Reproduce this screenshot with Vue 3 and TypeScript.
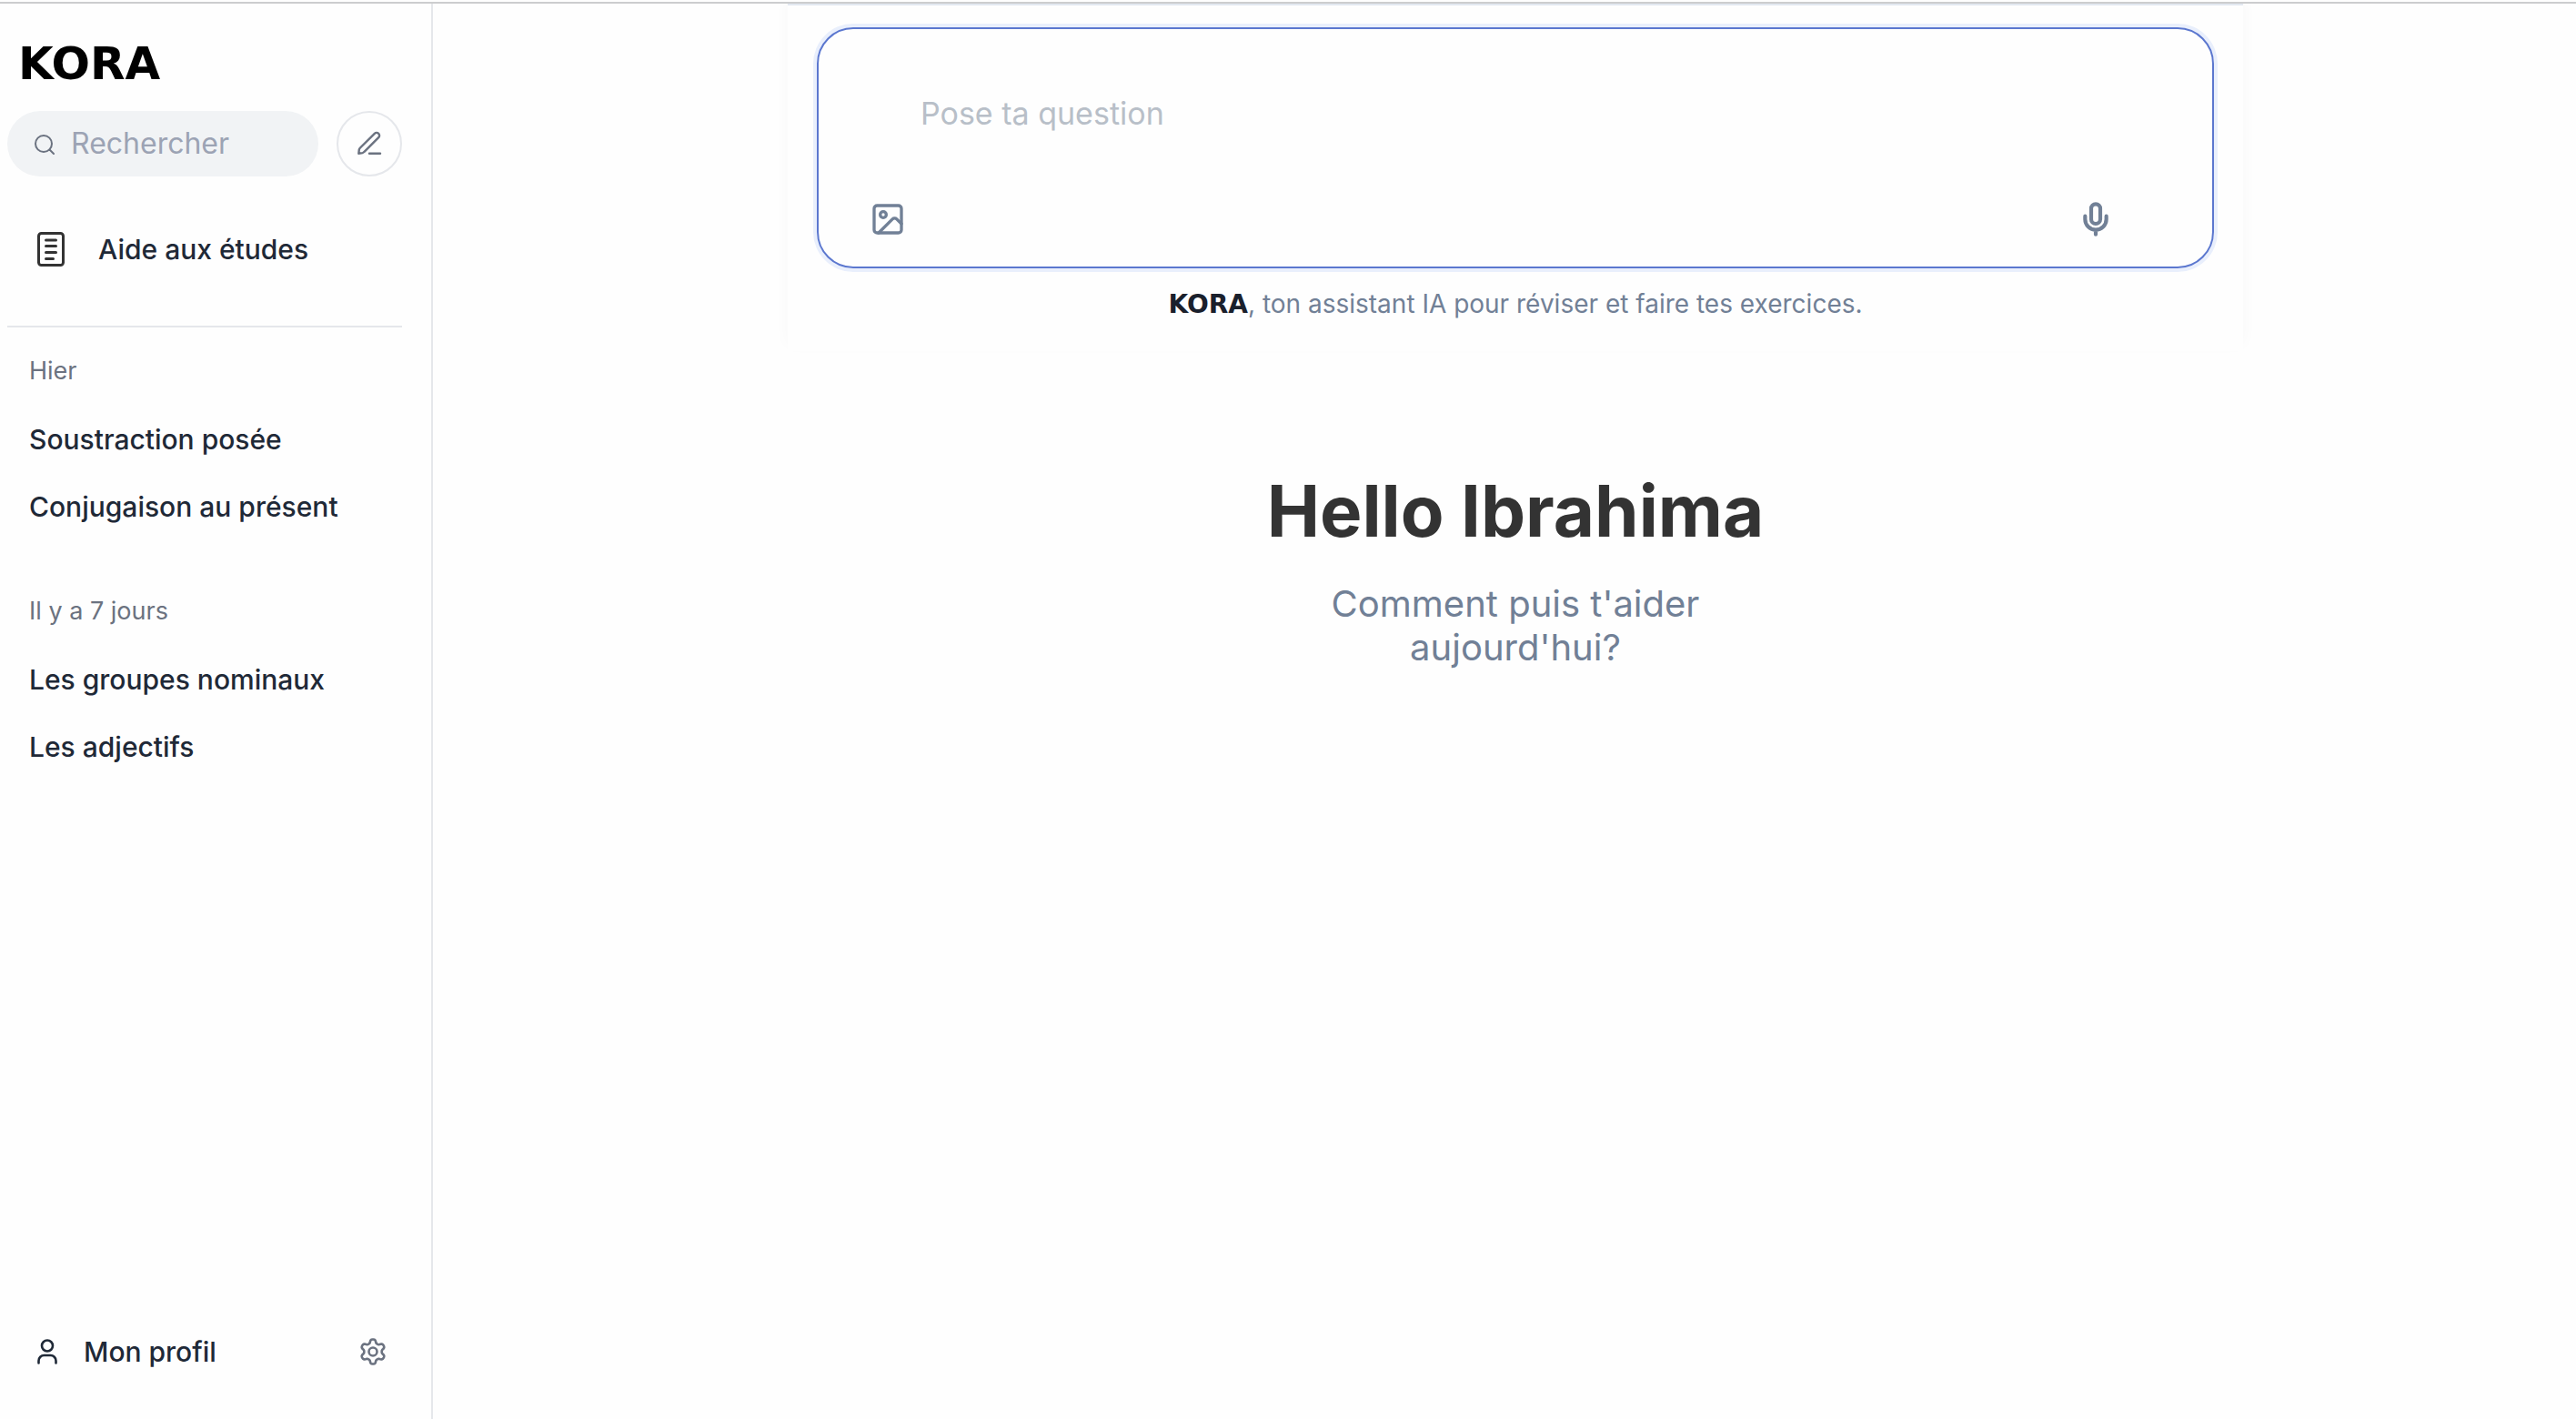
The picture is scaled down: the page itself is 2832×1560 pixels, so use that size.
<script setup lang="ts">
import { ref } from 'vue'

interface HistoryGroup {
  label: string
  items: string[]
}

const search = ref('')
const question = ref('')

const groups: HistoryGroup[] = [
  { label: 'Hier', items: ['Soustraction posée', 'Conjugaison au présent'] },
  { label: 'Il y a 7 jours', items: ['Les groupes nominaux', 'Les adjectifs'] },
]

// Outline of a gear with rounded teeth, the first one pointing up.
function gearOutline(teeth: number, middle: number, depth: number): string {
  const steps = 144
  const points: string[] = []
  for (let i = 0; i < steps; i++) {
    const angle = (i / steps) * Math.PI * 2
    const radius = middle + depth * Math.tanh(1.8 * Math.cos(teeth * angle))
    const x = 16 + radius * Math.sin(angle)
    const y = 16 - radius * Math.cos(angle)
    points.push(`${x.toFixed(2)} ${y.toFixed(2)}`)
  }
  return `M${points.join('L')}Z`
}

const gearPath = gearOutline(6, 11.6, 2)
</script>

<template>
  <div class="page">
    <aside class="sidebar">
      <a class="logo" href="#">KORA</a>

      <div class="tools">
        <label class="search">
          <svg class="icon-search" viewBox="0 0 24 24" aria-hidden="true">
            <circle cx="12" cy="12" r="9" />
            <path d="m18.500 18.500 4.500 4.500" />
          </svg>
          <input v-model="search" type="text" placeholder="Rechercher" aria-label="Rechercher" />
        </label>
        <button class="compose" type="button" aria-label="Nouvelle conversation">
          <svg viewBox="0 0 28 28" aria-hidden="true">
            <path d="M2.300 24.800 2.800 20.500Q3 19.500 4 18.500L19.800 2.800a3.100 3.100 0 0 1 4.400 4.400L8.500 22.800Q7.500 23.900 6.500 24.100Z" />
            <path d="M14 24.800h12" />
          </svg>
        </button>
      </div>

      <a class="study" href="#">
        <svg viewBox="0 0 30 38" aria-hidden="true">
          <rect x="1.5" y="1.5" width="27" height="35" rx="3" />
          <path d="M9.5 9h11M9.5 15.500h11M9.5 22.500h11M9.5 29.500h8" />
        </svg>
        <span>Aide aux études</span>
      </a>

      <nav class="history" aria-label="Historique">
        <section v-for="group in groups" :key="group.label" class="group">
          <h2>{{ group.label }}</h2>
          <ul>
            <li v-for="item in group.items" :key="item"><a href="#">{{ item }}</a></li>
          </ul>
        </section>
      </nav>

      <footer class="profile">
        <a class="profile-link" href="#">
          <svg viewBox="0 0 24 28" aria-hidden="true">
            <circle cx="12" cy="7.5" r="6" />
            <path d="M2.500 26.500v-2.500a6 6 0 0 1 6-6h7a6 6 0 0 1 6 6v2.500" />
          </svg>
          <span>Mon profil</span>
        </a>
        <button class="settings" type="button" aria-label="Paramètres">
          <svg viewBox="0 0 32 32" aria-hidden="true">
            <path :d="gearPath" />
            <circle cx="16" cy="16" r="4.5" />
          </svg>
        </button>
      </footer>
    </aside>

    <main class="main">
      <section class="panel">
        <form class="composer" @submit.prevent>
          <textarea v-model="question" rows="1" placeholder="Pose ta question" aria-label="Pose ta question"></textarea>
          <div class="actions">
            <button type="button" aria-label="Ajouter une image">
              <svg viewBox="0 0 24 24" aria-hidden="true">
                <rect x="3" y="3" width="18" height="18" rx="2" />
                <circle cx="9" cy="9" r="2" />
                <path d="m21 15-3.086-3.086a2 2 0 0 0-2.828 0L6 21" />
              </svg>
            </button>
            <button type="button" class="mic" aria-label="Dicter">
              <svg viewBox="0 0 24 24" aria-hidden="true">
                <rect x="9" y="2" width="6" height="13" rx="3" />
                <path d="M19 10v2a7 7 0 0 1-14 0v-2M12 19v3" />
              </svg>
            </button>
          </div>
        </form>
        <p class="tagline"><strong>KORA</strong>, ton assistant IA pour réviser et faire tes exercices.</p>
      </section>

      <section class="welcome">
        <h1>Hello Ibrahima</h1>
        <p>Comment puis t'aider aujourd'hui?</p>
      </section>
    </main>
  </div>
</template>

<style>
body {
  margin: 0;
  background: #fefefe;
}
</style>

<style scoped>
.page {
  box-sizing: border-box;
  display: flex;
  gap: 8px;
  min-height: 100vh;
  padding-top: 4px;
  background: linear-gradient(#fefefe 2px, #cccdce 2px, #cccdce 4px, #fefefe 4px);
  color: #1f2937;
  font-family: Inter, "Liberation Sans", sans-serif;
  font-size: 30px;
  font-weight: 500;
  line-height: 40px;
}

svg {
  display: block;
  flex: none;
  fill: none;
  stroke: currentColor;
  stroke-width: 2;
  stroke-linecap: round;
  stroke-linejoin: round;
}

a {
  color: inherit;
  text-decoration: none;
}

button {
  display: flex;
  align-items: center;
  justify-content: center;
  padding: 0;
  border: 0;
  background: none;
  color: #6b7280;
}

input,
textarea {
  min-width: 0;
  padding: 0;
  border: 0;
  outline: 0;
  background: none;
  color: inherit;
  font: inherit;
}

.sidebar {
  box-sizing: border-box;
  display: flex;
  flex: none;
  flex-direction: column;
  width: 476px;
  padding: 36px 32px 0 8px;
  border-right: 2px solid #e5e7eb;
}

.logo {
  align-self: flex-start;
  padding-left: 12px;
  color: #000;
  font-family: "DejaVu Sans", sans-serif;
  font-size: 50px;
  font-weight: 700;
  line-height: 60px;
}

.tools {
  display: flex;
  gap: 20px;
  margin-top: 22px;
}

.search {
  display: flex;
  flex: 1;
  align-items: center;
  gap: 18px;
  min-width: 0;
  height: 72px;
  padding: 0 28px;
  border-radius: 36px;
  background: #f1f3f5;
  color: #6b7280;
}

.icon-search {
  width: 24px;
  height: 24px;
}

.search input {
  flex: 1;
  font-size: 32px;
  font-weight: 400;
}

.search input::placeholder {
  color: #9ca3b4;
  opacity: 1;
}

.compose {
  box-sizing: border-box;
  width: 72px;
  height: 72px;
  border: 2px solid #e5e7eb;
  border-radius: 50%;
}

.compose svg {
  width: 28px;
  height: 28px;
  stroke-width: 2.4;
}

.study {
  display: flex;
  align-items: center;
  gap: 37px;
  height: 80px;
  margin: 40px 0 44px;
  padding-left: 33px;
}

.study svg {
  width: 30px;
  height: 38px;
  color: #333;
  stroke-width: 3;
}

.history {
  display: flex;
  flex: 1;
  flex-direction: column;
  gap: 58px;
  padding: 28px 24px 0;
  border-top: 2px solid #e5e7eb;
}

.group h2 {
  margin: 0 0 18px;
  color: #6b7280;
  font-size: 27px;
  font-weight: 400;
  line-height: 40px;
}

.group ul {
  margin: 0;
  padding: 0;
  list-style: none;
}

.group a {
  display: block;
  padding: 17px 0;
}

.profile {
  display: flex;
  align-items: center;
  justify-content: space-between;
  height: 80px;
  margin-bottom: 34px;
  padding: 0 16px 0 32px;
}

.profile-link {
  display: flex;
  align-items: center;
  gap: 28px;
}

.profile-link svg {
  width: 24px;
  height: 28px;
  stroke-width: 2.6;
}

.settings svg {
  width: 32px;
  height: 32px;
  stroke-width: 2.6;
}

.main {
  flex: 1;
  min-width: 0;
  padding: 0 0 0 16px;
  overflow: hidden;
}

.panel {
  box-sizing: border-box;
  max-width: 1600px;
  margin: 0 auto;
  padding: 24px 32px 32px;
  border-top: 2px solid #e2e8f0;
  background: #fefefe;
  box-shadow: 0 -8px 16px rgba(0, 0, 0, 0.03);
}

.composer {
  box-sizing: border-box;
  display: flex;
  flex-direction: column;
  justify-content: space-between;
  min-height: 265px;
  padding: 65px 108px 32px 56px;
  border: 2px solid #5b77cf;
  border-radius: 40px;
  box-shadow: 0 0 0 4px #e9effc;
}

.composer textarea {
  height: 56px;
  padding: 0 0 0 56px;
  resize: none;
  font-size: 34px;
  font-weight: 400;
  line-height: 56px;
  overflow: hidden;
}

.composer textarea::placeholder {
  color: #b8bfc8;
  opacity: 1;
}

.actions {
  display: flex;
  justify-content: space-between;
}

.actions button {
  color: #718096;
}

.actions svg {
  width: 40px;
  height: 40px;
}

.mic svg {
  stroke-width: 2.5;
}

.tagline {
  margin: 19px 0 0;
  color: #718096;
  font-size: 28px;
  font-weight: 400;
  text-align: center;
}

.tagline strong {
  color: #1a202c;
  font-family: "DejaVu Sans", sans-serif;
  font-weight: 700;
  line-height: 1;
}

.welcome {
  margin-top: 128px;
  text-align: center;
}

.welcome h1 {
  margin: 0;
  color: #333;
  font-size: 78px;
  font-weight: 700;
  line-height: 96px;
}

.welcome p {
  max-width: 480px;
  margin: 30px auto 0;
  color: #718096;
  font-size: 40px;
  font-weight: 400;
  line-height: 48px;
}
</style>
